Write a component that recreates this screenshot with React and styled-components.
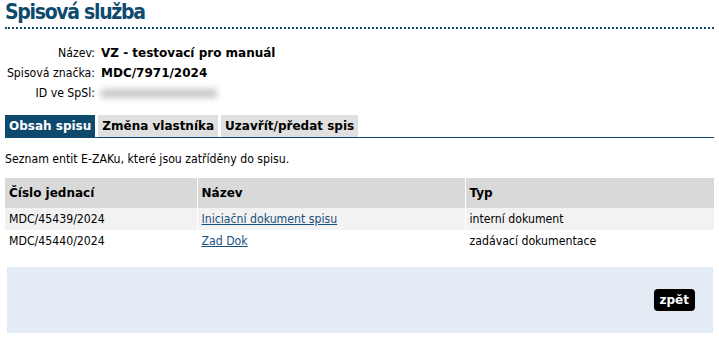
import React from 'react';
import styled, { createGlobalStyle } from 'styled-components';

const GlobalStyle = createGlobalStyle`
    body {
        margin: 0;
        background: #fff;
        font-family: "DejaVu Sans Condensed", "DejaVu Sans", sans-serif;
        font-size: 12.2px;
        color: #000;
    }
`;

const boldFont = '"DejaVu Sans", "Liberation Sans", sans-serif';

const rows = [
    { cj: 'MDC/45439/2024', name: 'Iniciační dokument spisu', type: 'interní dokument' },
    { cj: 'MDC/45440/2024', name: 'Zad Dok', type: 'zadávací dokumentace' }
];

export default function App() {
    return (
        <Page>
            <GlobalStyle />
            <Title>Spisová služba</Title>
            <Info>
                <Label>Název:</Label>
                <Value>VZ - testovací pro manuál</Value>
                <Label>Spisová značka:</Label>
                <Value>MDC/7971/2024</Value>
                <Label>ID ve SpSl:</Label>
                <Value><Blurred /></Value>
            </Info>
            <Tabs>
                <Tab $active>Obsah spisu</Tab>
                <Tab>Změna vlastníka</Tab>
                <Tab>Uzavřít/předat spis</Tab>
            </Tabs>
            <Lead>Seznam entit E-ZAKu, které jsou zatříděny do spisu.</Lead>
            <Table>
                <colgroup>
                    <col style={{ width: 192 }} />
                    <col style={{ width: 268 }} />
                    <col />
                </colgroup>
                <thead>
                    <tr>
                        <Th>Číslo jednací</Th>
                        <Th>Název</Th>
                        <Th>Typ</Th>
                    </tr>
                </thead>
                <tbody>
                    {rows.map((r, i) => (
                        <Row key={r.cj} $odd={i % 2 === 0}>
                            <Td>{r.cj}</Td>
                            <Td><Link href="#">{r.name}</Link></Td>
                            <Td>{r.type}</Td>
                        </Row>
                    ))}
                </tbody>
            </Table>
            <Footer>
                <BackButton>zpět</BackButton>
            </Footer>
        </Page>
    );
}

const Page = styled.div`
    padding: 0 5px;
`;

const Title = styled.h1`
    margin: 0;
    padding: 2px 0 5px;
    font-family: "DejaVu Sans Condensed", "DejaVu Sans", sans-serif;
    font-size: 21px;
    letter-spacing: -1.3px;
    font-weight: bold;
    color: #0d4a6e;
    border-bottom: 2px dotted #0d4a6e;
    line-height: 20px;
`;

const Info = styled.div`
    display: grid;
    grid-template-columns: 90px auto;
    column-gap: 6px;
    row-gap: 2px;
    margin-top: 15px;
    line-height: 18px;
`;

const Label = styled.div`
    text-align: right;
`;

const Value = styled.div`
    font-family: ${boldFont};
    font-size: 12px;
    font-weight: bold;
    display: flex;
    align-items: center;
`;

const Blurred = styled.span`
    display: inline-block;
    width: 116px;
    height: 9px;
    background: #c8c8c8;
    filter: blur(3px);
`;

const Tabs = styled.div`
    display: flex;
    gap: 3px;
    margin-top: 13px;
    border-bottom: 1px solid #0d4a6e;
`;

const Tab = styled.div`
    padding: 0 4px;
    height: 22px;
    line-height: 22px;
    font-family: ${boldFont};
    font-weight: bold;
    font-size: 12px;
    background: ${(p) => (p.$active ? '#0d4a6e' : '#e0e0e0')};
    color: ${(p) => (p.$active ? '#fff' : '#000')};
`;

const Lead = styled.p`
    margin: 14px 0 12px;
`;

const Table = styled.table`
    width: 709px;
    border-collapse: collapse;
    table-layout: fixed;
`;

const Th = styled.th`
    background: #d9d9d9;
    text-align: left;
    font-family: ${boldFont};
    font-size: 12px;
    font-weight: bold;
    height: 30px;
    padding: 0 4px;
    border-left: 1px solid #fff;
    &:first-child { border-left: none; }
`;

const Row = styled.tr`
    background: ${(p) => (p.$odd ? '#f2f2f2' : '#fff')};
`;

const Td = styled.td`
    height: 22px;
    padding: 0 4px;
    border-left: 1px solid #fff;
    &:first-child { border-left: none; }
`;

const Link = styled.a`
    color: #1a4f7c;
    text-decoration: underline;
`;

const Footer = styled.div`
    margin: 15px 1px 0 2px;
    height: 66px;
    background: #e3ecf4;
    display: flex;
    align-items: center;
    justify-content: flex-end;
    padding-right: 18px;
`;

const BackButton = styled.button`
    background: #000;
    color: #fff;
    border: none;
    border-radius: 4px;
    font-family: ${boldFont};
    font-size: 12px;
    font-weight: bold;
    height: 22px;
    padding: 0 6px;
    cursor: pointer;
`;
